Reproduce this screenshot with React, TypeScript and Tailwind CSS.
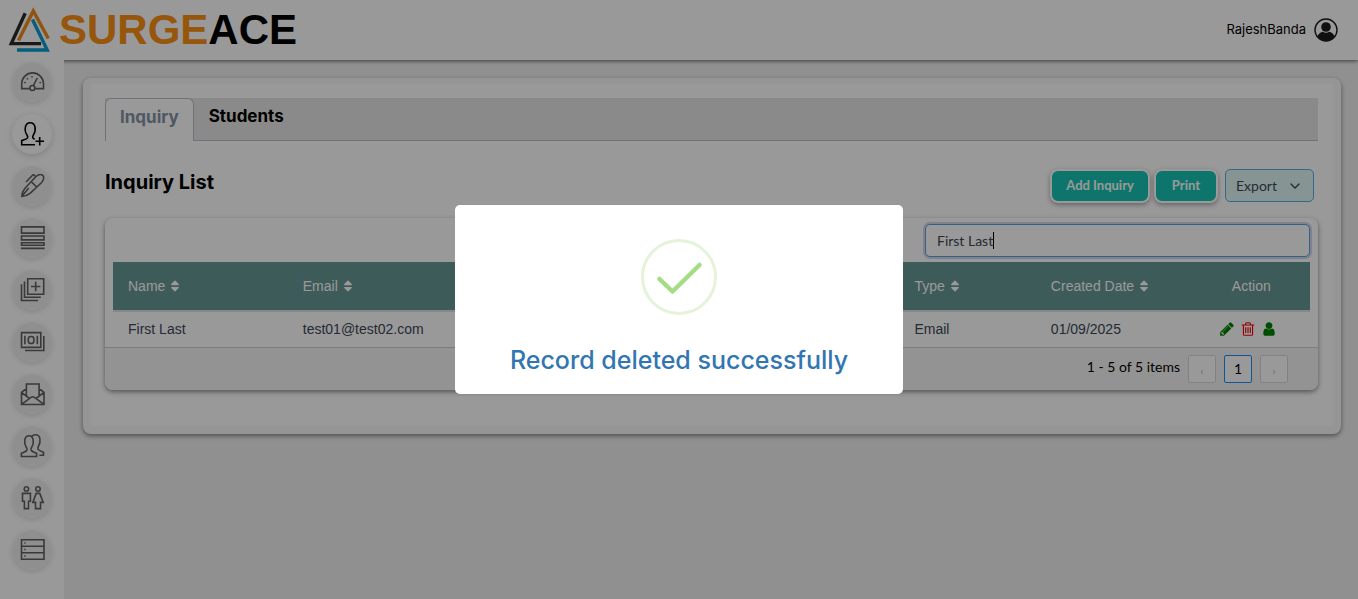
import type { ReactNode } from "react";
import { FaSort } from "react-icons/fa";
import { FiChevronDown } from "react-icons/fi";

function Glyph({ children }: { children: ReactNode }) {
  return (
    <svg viewBox="0 0 25 24" className="h-6 w-[25px] shrink-0" fill="none" stroke="currentColor" strokeWidth="1.6" aria-hidden="true">
      {children}
    </svg>
  );
}

const navItems: { label: string; active?: boolean; icon: ReactNode }[] = [
  {
    label: "Dashboard",
    icon: (
      <Glyph>
        <path d="M9.5 18.6H1.7V13.8a10.9 10.9 0 0 1 21.8 0V18.6H15.2" />
        <circle cx="12.4" cy="18" r="2.5" />
        <path d="M13.3 15.7 17.3 8" />
        <g fill="currentColor" stroke="none">
          <circle cx="5" cy="12.6" r=".9" />
          <circle cx="7.4" cy="8.8" r=".9" />
          <circle cx="12" cy="6.8" r=".9" />
          <circle cx="20.2" cy="12.6" r=".9" />
        </g>
      </Glyph>
    ),
  },
  {
    label: "Inquiries",
    active: true,
    icon: (
      <Glyph>
        <path d="M15 22.7H1.700v-4.100c2.600-1.100 5.200-1.200 5.900-2.800.3-.9-.1-2-.6-2.800C5.200 10.600 4.900 7.600 5.400 5 6 2 7.900.8 10.200.8s4.200 1.200 4.800 4.200c.5 2.600.2 5.600-1.600 8-.6.900-.9 1.900-.6 2.800.2.700.9 1.100 1.900 1.500M19.700 15v8.500M15.500 19.300h8.500" />
      </Glyph>
    ),
  },
  {
    label: "Follow up",
    icon: (
      <Glyph>
        <path d="M1.800 22.500C2 19.500 3 16.500 5 14.300L15.500 3C18.500.2 21.500.2 22.900 1.500c1.300 1.500 1 4.700-1.500 7.300L10.300 19.200C8 21.200 5 22.300 1.800 22.500ZM11.300 7.600l5.600 5.600M1.800 22.500l6.900-8.500M6 8 12.500 1.200c.7-.7 1.500-.4 2.700.6" />
      </Glyph>
    ),
  },
  {
    label: "Courses",
    icon: (
      <Glyph>
        <path d="M1.500.9h22.500v6.200H1.500zM1.500 10h22.500v3.900H1.500zM1.500 16.700h22.500v2.500H1.500zM.9 22.400h23.700" />
      </Glyph>
    ),
  },
  {
    label: "Batches",
    icon: (
      <Glyph>
        <path d="M7.700.8h16v15.500h-16zM15.700 3.800v9.400M11 8.500h9.400M4.500 3.500v15.800h16.300M1.500 6.300v16.200h16.600" />
      </Glyph>
    ),
  },
  {
    label: "Fees",
    icon: (
      <Glyph>
        <path d="M1.500 2.600h19.300v14.800H1.500zM23.800 6v14.500H5M4.900 5.800v8.400M17.300 5.800v8.400" />
        <rect x="8.300" y="6.500" width="5.600" height="7" rx="2.600" />
      </Glyph>
    ),
  },
  {
    label: "Messages",
    icon: (
      <Glyph>
        <path d="M6.400 6.500 1.500 10.300v12.200H24V10.300l-4.900-3.800M6.400 13.800V2h12.700v11.800M1.500 10.300l8 6.200M24 10.300l-8 6.200M1.500 22.300l9.500-6.900q1.700-1.200 3.400 0l9.600 6.900" />
      </Glyph>
    ),
  },
  {
    label: "Staff",
    icon: (
      <Glyph>
        <path d="M1.400 22.500v-3.300c2.400-1.100 4.900-1.500 5.500-3.100.3-.9-.1-2-.6-2.900C4.900 11 4.400 8.300 4.800 6 5.300 3.100 6.900 1.700 9 1.700s3.700 1.400 4.200 4.300c.4 2.300-.1 5-1.500 7.200-.5.900-.9 2-.6 2.900.6 1.600 3.100 2 5.500 3.100v3.300zM12 2.100c.9-1 2.200-1.300 3.500-1.300 2.300 0 3.900 1.200 4.400 3.900.4 2.400 0 5.100-1.300 7.300-.5.900-.9 2.100-.6 3 .6 1.700 3.200 2.200 5.500 3.300v3h-4.200" />
      </Glyph>
    ),
  },
  {
    label: "Parents",
    icon: (
      <Glyph>
        <circle cx="6.400" cy="3" r="2.200" />
        <circle cx="18" cy="3" r="2.200" />
        <path d="M2.500 7.400h7.900v7.900H8.500v7.300H4.400v-7.300H2.500zM16.200 7.400h3.600l3.400 9h-2.700v6.200h-5v-6.200h-2.700z" />
      </Glyph>
    ),
  },
  {
    label: "Records",
    icon: (
      <Glyph>
        <path d="M1.500 1.700h22.500v19.600H1.500zM1.500 8.300h22.500M1.500 14.700h22.500M4.200 5h1.400M4.200 11.500h1.400M4.200 18h1.400" />
      </Glyph>
    ),
  },
];

function Logo() {
  return (
    <a href="#home" className="flex items-center gap-[9px]" aria-label="SurgeAce home">
      <svg viewBox="0 0 42 46" className="h-[46px] w-[42px]" fill="none" strokeWidth="3.400" aria-hidden="true">
        <path d="M17.200 6.200 3.300 36.600H33" stroke="#2b2b2b" />
        <path d="M10.500 33.500 25.300 4 40.300 31.500" stroke="#f08c1c" />
        <path d="M24.500 12.500 39.200 43H9" stroke="#0a9bd2" />
      </svg>
      <span className="font-['Liberation_Sans',sans-serif] text-[42px] leading-[46px] font-bold text-black">
        <span className="text-[#fb8f14]">SURGE</span>ACE
      </span>
    </a>
  );
}

function SortHeader({ children }: { children: ReactNode }) {
  return (
    <th className="px-[15px] text-left font-normal">
      <button type="button" className="flex items-center gap-[3px]">
        {children}
        <FaSort className="size-[14px]" />
      </button>
    </th>
  );
}

const actions = [
  {
    label: "Edit",
    color: "text-[#008000]",
    d: "M491 1536l91-91-235-235-91 91v107h128v128h107zm523-928q0-22-22-22-10 0-17 7l-542 542q-7 7-7 17 0 22 22 22 10 0 17-7l542-542q7-7 7-17zm-54-192l416 416-832 832h-416v-416zm683 96q0 53-37 90l-166 166-416-416 166-165q36-38 90-38 53 0 91 38l235 234q37 39 37 91z",
  },
  {
    label: "Delete",
    color: "text-[#ff0000]",
    d: "M704 736v576q0 14-9 23t-23 9h-64q-14 0-23-9t-9-23v-576q0-14 9-23t23-9h64q14 0 23 9t9 23zm256 0v576q0 14-9 23t-23 9h-64q-14 0-23-9t-9-23v-576q0-14 9-23t23-9h64q14 0 23 9t9 23zm256 0v576q0 14-9 23t-23 9h-64q-14 0-23-9t-9-23v-576q0-14 9-23t23-9h64q14 0 23 9t9 23zm128 724v-948h-896v948q0 22 7 40.500t14.500 27 10.500 8.500h832q3 0 10.500-8.500t14.500-27 7-40.500zm-672-1076h448l-48-117q-7-9-17-11h-317q-10 2-17 11zm928 32v64q0 14-9 23t-23 9h-96v948q0 83-47 143.500t-113 60.500h-832q-66 0-113-58.500t-47-141.500v-952h-96q-14 0-23-9t-9-23v-64q0-14 9-23t23-9h309l70-167q15-37 54-63t79-26h320q40 0 79 26t54 63l70 167h309q14 0 23 9t9 23z",
  },
  {
    label: "Convert to student",
    color: "text-[#008000]",
    d: "M1536 1399q0 109-62.500 187t-150.500 78h-854q-88 0-150.500-78t-62.500-187q0-85 8.500-160.500t31.500-152 58.500-131 94-89 134.500-34.500q131 128 313 128t313-128q76 0 134.500 34.500t94 89 58.500 131 31.500 152 8.500 160.500zm-256-887q0 159-112.500 271.500t-271.500 112.500-271.500-112.500-112.500-271.500 112.500-271.500 271.500-112.500 271.500 112.500 112.500 271.500z",
  },
];

export default function App() {
  return (
    <div className="flex min-h-screen flex-col bg-[#f1f1f1] font-['Lato',sans-serif] text-black">
      <header className="relative flex h-[60px] items-center justify-between bg-white pr-5 pl-2 shadow-[0_1px_4px_rgba(0,0,0,0.6)]">
        <Logo />
        <button type="button" className="flex items-center gap-2 font-['Inter',sans-serif] text-[13px]">
          RajeshBanda
          <svg viewBox="0 0 24 24" className="size-6" aria-hidden="true">
            <circle cx="12" cy="12" r="11" fill="none" stroke="#1c1c1c" strokeWidth="1.400" />
            <circle cx="12" cy="9" r="4.800" fill="#1c1c1c" />
            <path d="M3.500 18.500C4.500 15.600 6.500 14 8.800 13.700 10.800 15 13.200 15 15.200 13.700 17.500 14 19.500 15.600 20.500 18.500 18.500 21.500 15.500 23 12 23S5.500 21.500 3.500 18.500Z" fill="#1c1c1c" />
          </svg>
        </button>
      </header>

      <div className="flex flex-1">
        <nav className="relative flex w-16 shrink-0 flex-col items-center gap-3 bg-white pt-[2px]" aria-label="Main">
          {navItems.map((item) => (
            <a
              key={item.label}
              href="#nav"
              aria-label={item.label}
              className={
                item.active
                  ? "flex size-10 items-center justify-center rounded-full bg-white pl-px text-black shadow-[0_2px_6px_rgba(0,0,0,0.16)]"
                  : "flex size-10 items-center justify-center rounded-full border border-[#f5f5f5] bg-[#efefef] pl-px text-[#606060] shadow-[0_2px_5px_rgba(0,0,0,0.12)]"
              }
            >
              {item.icon}
            </a>
          ))}
        </nav>

        <main className="min-w-0 flex-1 pt-[18px] pr-[17px] pl-[19px]">
          <div className="rounded-lg bg-[#f9f9f9] px-2 pt-[6px] pb-2 shadow-[0_2px_5px_rgba(0,0,0,0.45)]">
            <div className="bg-white pt-[14px] pr-[15px] pb-9 pl-[14px]">
              <div role="tablist" className="flex h-[43px] border-b border-[#b8bdc9] bg-[#e6e6e6] font-['Inter',sans-serif] text-[17px] font-bold">
                <button
                  type="button"
                  role="tab"
                  aria-selected="true"
                  className="-mb-px rounded-t-md border border-b-0 border-[#b8bdc9] bg-white px-[14px] pb-1 text-[#8492a6]"
                >
                  Inquiry
                </button>
                <button type="button" role="tab" aria-selected="false" className="px-[15px] pb-1">
                  Students
                </button>
              </div>

              <div className="mt-7 flex items-start justify-between pr-1">
                <h1 className="font-['Inter',sans-serif] text-xl leading-[26px] font-bold">Inquiry List</h1>
                <div className="flex items-start gap-1">
                  <button type="button" className="h-[34px] rounded-lg border-2 border-white bg-[#17c3b2] px-[14px] text-[13px] font-bold text-white shadow-[0_2px_5px_rgba(0,0,0,0.35)]">
                    Add Inquiry
                  </button>
                  <button type="button" className="h-[34px] rounded-lg border-2 border-white bg-[#17c3b2] px-4 text-[13px] font-bold text-white shadow-[0_2px_5px_rgba(0,0,0,0.35)]">
                    Print
                  </button>
                  <button type="button" className="ml-[3px] flex h-[33px] items-center gap-[10px] rounded-[5px] border border-[#57aee2] bg-[#e0f8f6] px-[10px] text-sm text-[#3c4858]">
                    Export
                    <FiChevronDown className="size-4" />
                  </button>
                </div>
              </div>

              <section className="mt-[15px] overflow-hidden rounded-lg bg-white shadow-[0_2px_5px_rgba(0,0,0,0.45)]">
                <div className="flex justify-end px-2 pt-[6px] pb-[5px]">
                  <div className="relative w-[385px]">
                    <input
                      type="text"
                      aria-label="Search inquiries"
                      defaultValue="First Last"
                      className="block h-[33px] w-full rounded-[5px] border border-[#4da3e0] bg-white px-[11px] text-sm text-[#3c4858] shadow-[0_0_0_2px_#d9d5ee] outline-none"
                    />
                    <span className="absolute top-2 left-[68px] h-[17px] w-px bg-black" />
                  </div>
                </div>
                <div className="border-b border-[#cfcfcf] px-2">
                  <table className="w-full table-fixed border-collapse font-['Liberation_Sans',sans-serif] text-sm">
                    <colgroup>
                      <col className="w-[14.6%]" />
                      <col className="w-[51.1%]" />
                      <col className="w-[11.4%]" />
                      <col className="w-[13.1%]" />
                      <col />
                    </colgroup>
                    <thead>
                      <tr className="h-[49px] border-b-2 border-[#dee2e6] bg-[#669893] text-white">
                        <SortHeader>Name</SortHeader>
                        <SortHeader>Email</SortHeader>
                        <SortHeader>Type</SortHeader>
                        <SortHeader>Created Date</SortHeader>
                        <th className="text-center font-normal">Action</th>
                      </tr>
                    </thead>
                    <tbody>
                      <tr className="h-9 text-[#3c4858]">
                        <td className="px-[15px] pb-[2px]">First Last</td>
                        <td className="px-[15px] pb-[2px]">test01@test02.com</td>
                        <td className="px-[15px] pb-[2px]">Email</td>
                        <td className="px-[15px] pb-[2px]">01/09/2025</td>
                        <td className="pb-[2px]">
                          <div className="flex items-center justify-center gap-[5px] pr-[7px]">
                            {actions.map((a) => (
                              <button key={a.label} type="button" aria-label={a.label} className={a.color}>
                                <svg viewBox="0 0 1792 1792" className="size-4" fill="currentColor" aria-hidden="true">
                                  <path d={a.d} />
                                </svg>
                              </button>
                            ))}
                          </div>
                        </td>
                      </tr>
                    </tbody>
                  </table>
                </div>
                <div className="flex h-[42px] items-center justify-end gap-2 bg-[#f6f6f6] pr-[30px] text-sm">
                  <span className="pb-1">1 - 5 of 5 items</span>
                  <button type="button" disabled aria-label="Previous page" className="size-7 rounded-xs border border-[#d9d9d9] bg-white pt-1 text-xs text-[#c0c0c0]">
                    ‹
                  </button>
                  <button type="button" aria-current="page" className="size-7 rounded-xs border border-[#1890ff] bg-white">
                    1
                  </button>
                  <button type="button" disabled aria-label="Next page" className="size-7 rounded-xs border border-[#d9d9d9] bg-white pt-1 text-xs text-[#c0c0c0]">
                    ›
                  </button>
                </div>
              </section>
            </div>
          </div>
        </main>
      </div>

      <div className="fixed inset-0 z-10 flex items-center justify-center bg-black/40">
        <div role="dialog" aria-modal="true" aria-labelledby="dialog-title" className="flex w-[448px] flex-col items-center rounded-[5px] bg-white pt-[34px] pb-4">
          <svg viewBox="0 0 76 76" className="size-[76px]" fill="none" aria-hidden="true">
            <circle cx="38" cy="38" r="36.500" stroke="#e4f3d9" strokeWidth="3" />
            <path d="M18.500 40 31.500 52.500 58.500 26" stroke="#a5dc86" strokeWidth="4.500" strokeLinecap="round" strokeLinejoin="round" />
          </svg>
          <h2 id="dialog-title" className="mt-7 font-['Inter',sans-serif] text-[25px] leading-[35px] font-medium text-[#3176b1]">
            Record deleted successfully
          </h2>
        </div>
      </div>
    </div>
  );
}
